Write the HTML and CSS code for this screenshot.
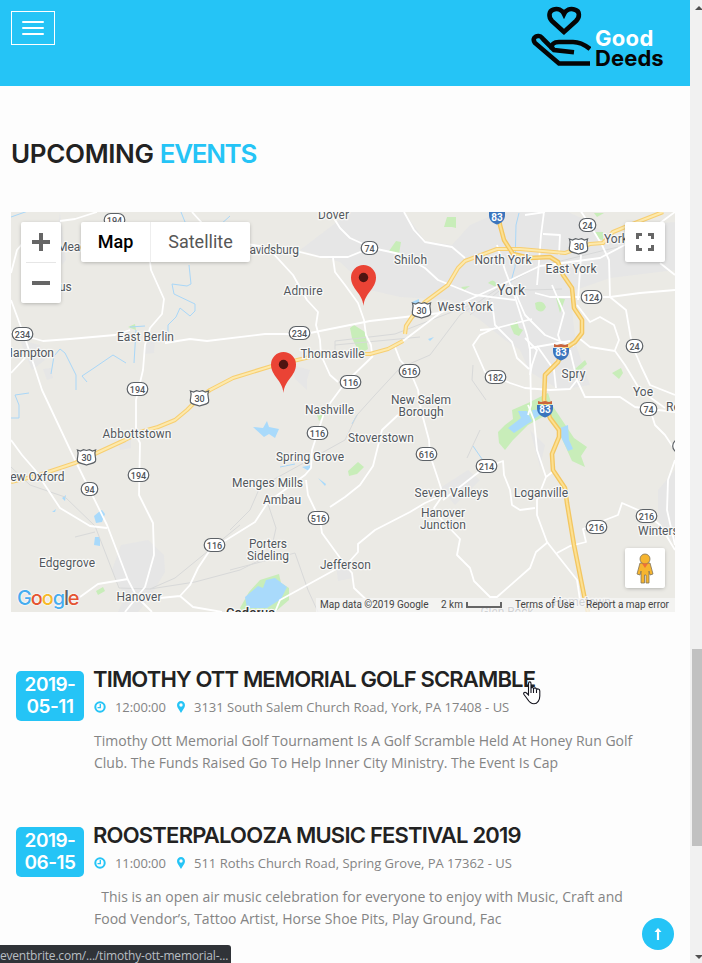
FILE: index.html
```html
<!DOCTYPE html>
<html lang="en">
<head>
<meta charset="utf-8">
<title>Good Deeds - Upcoming Events</title>
<link rel="stylesheet" href="styles.css">
</head>
<body>
<div class="page">
  <header class="header">
    <button class="menu" aria-label="Menu"><span></span><span></span><span></span></button>
    <div class="brand">
      <svg class="brand-icon" width="60" height="62" viewBox="531 6 60 62" fill="none" stroke="#050505" stroke-width="4.6">
        <path d="M564 32 L552 21 C548 17 549 11 553 9.700 C558 8 562 10 564 14 C566 10 570 8 575 9.700 C580 11 580 17 576 21 Z"/>
        <path d="M590 63.500 H559 L535 43 C532 39 535 35.500 539 36 C541 36 542 38 543.500 39.500 L554 50 L574 52.300"/>
        <path d="M552 49 C551 44 554 42 559 42 H573 C580 42 585 45 590 49"/>
      </svg>
      <div class="brand-name"><span class="good">Good</span><span class="deeds">Deeds</span></div>
    </div>
  </header>
  <main>
    <h1 class="title">UPCOMING <span>EVENTS</span></h1>
    <section class="map">
      <svg class="map-canvas" width="664" height="400" viewBox="11 212 664 400">
        <defs>
          <g id="s3"><rect x="-10.300" y="-6.500" width="20.600" height="13" rx="6.500"/></g>
          <g id="s2"><rect x="-8.300" y="-6.500" width="16.600" height="13" rx="6.500"/></g>
          <path id="us" d="M-9 -7 L-6 -6 L-3 -7.300 L0 -6.500 L3 -7.300 L6 -6 L9 -7 C7 -2 10 0 9 4 C8 7 4 6 0 8 C-4 6 -8 7 -9 4 C-10 0 -7 -2 -9 -7Z"/>
          <g id="i83"><path d="M-8 -4 H8 V-1 C8 5 4 7 0 8.500 C-4 7 -8 5 -8 -1Z" fill="#3b75bd"/><path d="M-7 -5 V-8 L-4 -7 L0 -8 L4 -7 L7 -8 V-5Z" fill="#c9643d"/></g>
          <g id="pin"><path d="M0 27 C-1 14 -12.500 10 -12.500 -1.500 A12.500 12.500 0 0 1 12.500 -1.500 C12.500 10 1 14 0 27Z" fill="#ea4335"/><circle cy="-1.500" r="4.700" fill="#4f1411"/></g>
        </defs>
        <rect x="11" y="212" width="664" height="400" fill="#ebeae5"/>
        <g fill="#e6e6e6">
          <path d="M350 212 L404 212 L425 241 L452 245 L470 225 L500 212 L568 212 L590 222 L612 240 L640 225 L675 222 V270 L610 278 L570 292 L576 345 L590 385 L560 390 L530 372 L520 350 L505 340 L480 320 L450 300 L400 297 L370 290 L340 262 L300 250 Z"/>
          <path d="M121 545 L148 540 L164 555 L165 572 L150 597 L138 612 H118 L125 597 L112 570Z"/>
          <path d="M60 213 L66 260 L62 265 L55 240Z M20 340 L40 345 L45 360 L32 370Z M43 369 l8 -1 l2 10 l-6 2z M145 334 l10 5 l-1 14 l-9 1z M292 365 l18 5 l-3 10 l0 10 l-12 -11z M440 488 l28 -18 l12 10 l-25 25z M530 430 l15 15 l-5 22z M658 490 l17 -20 v75 l-17 -25z M118 440 l13 -1 v9 l-11 2z M336 565 l12 3 l5 10 l-15 3z"/>
        </g>
        <g fill="#c8edb9">
          <path d="M350 328 l4 -3 l11 7 l3 17 l-8 5 l-8 -16z M389 251 l7 -10 l5 1 l-2 12z M444 227 l3 -10 l9 0 v11l-4 -1z M535 303 q8 -4 11 4 q-4 8 -10 2z M510 325 l7 -4 l2 7 l4 2 l-4 6 l-5 -2z M556 298 l9 1 l-5 14z M594 232 l9 0 v8l-5 -1z M488 283 q5 -5 8 0 v4z M575 369 l10 -9 l2 4 l-9 8z M612 373 l9 -5 l2 5 l-4 6z M128 327 l7 -3 l1 6z M348 471 l10 -9 l6 5 l-7 7 l-8 2z M96 591 l7 -4 l2 4 l-7 4z M461 287 l9 -1 l-6 4z M594 213 l10 0 l-7 4z M317 415 l8 0 l-6 6z"/>
          <path d="M498 432 L505 425 L513 419 L512 410 L528 403 L548 393 L552 405 L574 438 L587 447 L581 456 L585 467 L572 461 L558 430 L546 415 L528 425 L513 440 L505 450 L499 443Z"/>
          <path d="M240 608 L249 592 L260 580 L279 574 L281 583 L289 588 L289 600 L275 612 H242Z"/>
        </g>
        <g fill="#a9dafb">
          <path d="M245 597 L258 586 L263 588 L266 580 L275 578 L287 587 L281 599 L267 608 L247 608Z M253 427 L263 428 L267 421 L269 427 L279 429 L275 438 L269 434 L264 437Z M508 428 L521 418 L518 411 L527 411 L532 421 L514 433Z M532 410 L545 409 L543 413 L534 419Z M545 414 L560 428 L568 425 L569 440 L573 449 L568 451 L560 435Z M94 516 l6 -5 l2 -1 l3 4 l-3 8 l-6 1z M95 537 l5 0 v9 l-6 -1z M62 498 l4 -3 l-1 6z M318 478 l8 6 l-1 2z M302 467 l9 -2 l-2 6z M412 302 l7 -3 v10 l-6 0z M428 339 l6 -2 l-4 4z M52 512 l4 -3 l-1 3z"/>
        </g>
        <g fill="none" stroke="#a9d7f8" stroke-width="1">
          <path d="M11 217 L28 211 M181 212 L185 222 L198 232 L208 227 M220 225 L230 216 M189 265 L191 284 L187 286 L172 284 L174 294 L195 304 L195 311 L190 316 L180 308 L176 317 L168 325 L168 332 M145 326 L130 327 M136 330 L134 363 M126 363 L113 355 L94 368 L82 376 L87 382 M76 390 L76 375 L65 353 L60 349 L54 356 L51 374 M29 393 L15 395 L19 405 L19 418 L11 418 M519 213 L516 225 L515 267 L510 285 M473 446 L482 459 M280 467 L295 464 M352 424 L357 415 M689 545 L689 555"/>
        </g>
        <g fill="none" stroke="#d8d9d9" stroke-width="1">
          <path d="M11 467 L30 485 L65 497 L95 526 L119 588 L150 589 L175 578 L240 525 M150 589 L195 582 L240 570 L270 555 L276 528 L268 504 M75 537 L95 532 M230 530 L250 510 L260 487 L300 465 L345 440 L357 415 L375 395 L400 368 L430 355 L460 315 L500 287 L530 290 L562 289 M335 350 V341 L395 334 L470 305 M230 570 L295 553 L308 590 L318 612 M473 365 L472 380 L486 400 M467 458 L480 430 M470 315 L510 282 L540 266 L618 247 M335 345 L420 337"/>
        </g>
        <g fill="none" stroke="#fff" stroke-width="1.800" stroke-linejoin="round">
          <path d="M11 273 L17 250 L22 244 M60 221 L75 219 L97 212 M192 212 L202 223 M150 262 L151 270 L164 299 L162 314 L150 328 L145 345 L143 370 L136 400 L136 435 L140 443 L139 495 L153 523 L154 555 L145 587 L125 612"/>
          <path d="M11 300 L25 338 L42 390 L75 460 L107 525 L128 580 L137 597 L152 612 M11 332 L43 341 L70 339 L115 335 L130 330 M165 343 L190 339 L207 341 L265 334 L305 334 L335 328 L370 321 L405 317 L440 313 M11 373 L25 358 M11 440 L22 455 L35 470 L60 508 L90 526 L107 528 M80 597 L98 584 L128 579"/>
          <path d="M140 600 L180 596 L193 607 L222 612 M180 596 L190 585 L198 568 L210 550 L255 522 L268 502 L305 475 L311 468 L312 450 L325 410 L345 383 L373 356 M330 212 L340 228 L350 238 L372 248 L400 254 L425 268 L438 280 L475 295 L515 300"/>
          <path d="M240 243 L300 252 L320 257 L348 257 L370 248 M333 258 L335 272 L345 285 L358 303 L364 320 L366 335 L371 345 L372 354 M270 250 L293 275 L307 300 L318 312 L316 325 L320 340 L321 355 L330 375 L338 382 M404 212 L414 230 L425 242 L452 247 L465 258"/>
          <path d="M403 341 L440 313 L490 290 L540 266 L600 258 L636 239 M395 347 L400 360 L410 371 L418 390 L421 410 L429 440 L430 455 L440 485 L443 495 L425 503 L410 512 L375 530 L358 544 L358 552 L349 562 L280 600 L275 612"/>
          <path d="M306 480 L308 495 L320 520 L322 533 L343 562 L352 573 L354 588 L375 608 M330 507 L345 497 L360 485 L373 466 L382 430 L398 415 M443 500 L475 475 L484 468 L503 461 L504 475 L510 490 L512 505 L520 510 L535 508 M443 495 L434 508 L440 518 L460 539 L457 555 L470 568 L474 581 L490 597 L497 597 L530 568 L536 552 L548 542"/>
          <path d="M528 405 L534 420 L537 450 L546 477 L537 500 L537 515 L547 542 L577 580 L580 600 M546 477 L555 470 M557 553 L570 546 L586 542 L583 529 L600 522 L618 515 L622 503 L645 513 L660 525 L675 550 M675 460 L668 480 L667 510 L675 545"/>
          <path d="M525 215 L545 212 M544 212 L541 235 L539 262 L537 285 M543 234 L560 235 L559 255 M581 255 L578 300 M497 245 L505 270 L515 297 L527 335 L530 350 L531 405 L528 415 M492 302 L495 325 L512 342 L517 358 L529 369 M512 285 L525 315 L545 335 L562 342 L574 346 M535 293 L550 297 L580 297 L610 297 L640 293 L675 290 M552 285 L564 313 L558 335 L562 347 M480 330 L493 329 L532 319 M495 328 L480 335 L473 345 L485 372 L510 383 L525 388 L550 390 L570 389 L577 380 L570 350"/>
          <path d="M525 338 L537 350 L532 365 L530 375 M537 346 L554 370 L556 388 M577 305 L590 322 L600 317 L614 325 L619 340 L615 350 M580 339 L590 347 L615 351 L625 365 L640 390 L665 408"/>
          <path d="M580 210 L590 225 L602 245 L609 260 L610 297 L626 310 L632 345 L641 366 L650 385 L675 395 M577 380 L585 397 L620 397 L635 407 L650 409 L675 412 M650 409 L655 425 L665 435 L675 450 M660 263 L675 275 M660 223 L675 212 M530 348 L570 341"/>
        </g>
        <g fill="none" stroke-linejoin="round">
          <path stroke="#f7cf72" stroke-width="4.200" d="M11 482 L36 476 L75 463 L125 440 L140 432 L158 427 L175 420 L187 410 L200 397 L210 390 L233 378 L272 366 L310 357 L335 354 L370 354 L388 349 L403 341 M405 334 L406 326 L412 317 L425 302 L448 285 L458 268 L465 261 L497 249 L520 249 L565 253 L590 244 L603 243 L613 232 L630 225 L663 212"/>
          <path stroke="#fde9ac" stroke-width="2" d="M11 482 L36 476 L75 463 L125 440 L140 432 L158 427 L175 420 L187 410 L200 397 L210 390 L233 378 L272 366 L310 357 L335 354 L370 354 L388 349 L403 341 M405 334 L406 326 L412 317 L425 302 L448 285 L458 268 L465 261 L497 249 L520 249 L565 253 L590 244 L603 243 L613 232 L630 225 L663 212"/>
          <path stroke="#f3c660" stroke-width="4.600" d="M498 212 L500 225 L504 240 L513 254 L530 258 L550 257 L558 262 L563 275 L572 288 L574 308 L582 320 L582 333 L575 342 L563 350 L558 362 L545 375 L544 400 L550 418 L559 430 L559 437 L552 454 L553 470 L565 488 L567 503 L574 545 L585 600 L588 612"/>
          <path stroke="#fce092" stroke-width="2" d="M498 212 L500 225 L504 240 L513 254 L530 258 L550 257 L558 262 L563 275 L572 288 L574 308 L582 320 L582 333 L575 342 L563 350 L558 362 L545 375 L544 400 L550 418 L559 430 L559 437 L552 454 L553 470 L565 488 L567 503 L574 545 L585 600 L588 612"/>
        </g>
        <g class="shields">
          <use href="#s3" x="114.500" y="220"/><use href="#s3" x="22.500" y="334"/><use href="#s3" x="137.500" y="389"/><use href="#s3" x="138.500" y="475"/><use href="#s3" x="214.500" y="545"/><use href="#s3" x="299.500" y="333"/><use href="#s3" x="350.500" y="382"/><use href="#s3" x="317.500" y="433"/><use href="#s3" x="409.500" y="371"/><use href="#s3" x="426.500" y="454"/><use href="#s3" x="318.500" y="518"/><use href="#s3" x="486.500" y="466"/><use href="#s3" x="495.500" y="377"/><use href="#s3" x="591.500" y="297"/><use href="#s3" x="596.500" y="527"/><use href="#s3" x="646.500" y="516"/><use href="#s3" x="683" y="446"/>
          <use href="#s2" x="89.500" y="489"/><use href="#s2" x="369.500" y="248"/><use href="#s2" x="587.500" y="225"/><use href="#s2" x="634.500" y="346"/><use href="#s2" x="648.500" y="409"/>
          <use href="#us" x="199.500" y="398"/><use href="#us" x="86.500" y="457"/><use href="#us" x="421.500" y="310"/><use href="#us" x="578.500" y="246"/>
        </g>
        <use href="#i83" x="497" y="216"/><use href="#i83" x="561" y="352"/><use href="#i83" x="545" y="409"/>
        <g class="nums">
          <text x="114.500" y="223.500">194</text><text x="22.500" y="337.500">234</text><text x="137.500" y="392.500">194</text><text x="138.500" y="478.500">194</text><text x="214.500" y="548.500">116</text><text x="299.500" y="336.500">234</text><text x="350.500" y="385.500">116</text><text x="317.500" y="436.500">116</text><text x="409.500" y="374.500">616</text><text x="426.500" y="457.500">616</text><text x="318.500" y="521.500">516</text><text x="486.500" y="469.500">214</text><text x="495.500" y="380.500">182</text><text x="591.500" y="300.500">124</text><text x="596.500" y="530.500">216</text><text x="646.500" y="519.500">216</text>
          <text x="89.500" y="492.500">94</text><text x="369.500" y="251.500">74</text><text x="587.500" y="228.500">24</text><text x="634.500" y="349.500">24</text><text x="648.500" y="412.500">74</text><text x="199.500" y="402">30</text><text x="86.500" y="461">30</text><text x="421.500" y="313.500">30</text><text x="579" y="250">30</text>
          <g class="inter"><text x="497" y="220.500">83</text><text x="561" y="356">83</text><text x="545" y="413">83</text></g>
        </g>
        <g class="labels">
          <text x="333.500" y="219" textLength="31">Dover</text>
          <text x="242" y="254" class="start" textLength="57">Davidsburg</text>
          <text x="57" y="251" class="start">Meadow</text><text x="59" y="291" class="start">us</text>
          <text x="410.500" y="264" textLength="33">Shiloh</text>
          <text x="303" y="295" textLength="39">Admire</text>
          <text x="145.500" y="341" textLength="57">East Berlin</text>
          <text x="54" y="357" class="end">Hampton</text>
          <text x="332.500" y="358" textLength="64">Thomasville</text>
          <text x="329.500" y="414" textLength="49">Nashville</text>
          <text x="421" y="404" textLength="60">New Salem</text><text x="421" y="416" textLength="45">Borough</text>
          <text x="381" y="442" textLength="66">Stoverstown</text>
          <text x="137" y="438" textLength="69">Abbottstown</text>
          <text x="64.500" y="481" class="end">New Oxford</text>
          <text x="310" y="461" textLength="68">Spring Grove</text>
          <text x="267.500" y="487" textLength="71">Menges Mills</text>
          <text x="282" y="504" textLength="38">Ambau</text>
          <text x="268" y="548" textLength="38">Porters</text><text x="268" y="560" textLength="42">Sideling</text>
          <text x="345.500" y="569" textLength="51">Jefferson</text>
          <text x="67" y="567" textLength="56">Edgegrove</text>
          <text x="139" y="601" textLength="45">Hanover</text>
          <text x="503" y="264" textLength="57">North York</text>
          <text x="571" y="273" textLength="51">East York</text>
          <text x="604" y="243" class="start">Yorklyn</text>
          <text x="511" y="295" class="city" textLength="28">York</text>
          <text x="465" y="311" textLength="55">West York</text>
          <text x="573.500" y="378" textLength="24">Spry</text>
          <text x="643" y="396" textLength="20">Yoe</text>
          <text x="666" y="411" class="start">Red Lion</text>
          <text x="451.500" y="497" textLength="74">Seven Valleys</text>
          <text x="541" y="497" textLength="54">Loganville</text>
          <text x="443" y="517" textLength="44">Hanover</text><text x="443" y="529" textLength="46">Junction</text>
          <text x="638" y="535" class="start">Winterstown</text>
          <text x="582" y="606" textLength="58">Hometown</text>
          <text x="507" y="616" textLength="53">Glen Rock</text>
          <text x="226" y="617" class="start dark" textLength="49">Codorus</text>
        </g>
        <use href="#pin" x="363.500" y="279"/><use href="#pin" x="283.500" y="366"/>
      </svg>
      <div class="zoomer"><span class="plus"></span><hr><span class="minus"></span></div>
      <div class="types"><b>Map</b><span>Satellite</span></div>
      <div class="square fullscreen"><svg width="18" height="18" fill="none" stroke="#666" stroke-width="3"><path d="M1.500 6V1.500H6M12 1.500H16.500V6M16.500 12V16.500H12M6 16.500H1.500V12"/></svg></div>
      <div class="square pegman"><svg width="18" height="31" viewBox="0 0 18 31" fill="#f6b52f" stroke="#80745c" stroke-width=".8"><path d="M4 10 H14 L17 21 L14 22 L13 18 V30 H10 V22 H8.500 V30 H5 V18 L4 22 L1 21Z"/><circle cx="9" cy="6" r="5"/><path d="M6 10.500H12L9 15Z" fill="#ee7137" stroke="none"/></svg></div>
      <div class="google"><i class="b">G</i><i class="r">o</i><i class="y">o</i><i class="b">g</i><i class="k">l</i><i class="r">e</i></div>
      <div class="credits"><span class="copyright">Map data ©2019 Google</span><span class="scale">2 km <i></i></span><span class="terms">Terms of Use</span><span class="report">Report a map error</span></div>
    </section>
    <section class="events">
      <article class="event">
        <time class="date">2019-<br>05-11</time>
        <div class="info">
          <h2 class="one">TIMOTHY OTT MEMORIAL GOLF SCRAMBLE</h2>
          <p class="meta"><svg class="clock" width="12" height="12"><circle cx="6" cy="6" r="4.700" fill="none" stroke="#25c4f6" stroke-width="2"/><path d="M6.300 3V6.700H3.500" fill="none" stroke="#25c4f6" stroke-width="1.300"/></svg><span class="hour">12:00:00</span><svg class="spot" width="8" height="12"><path fill="#25c4f6" fill-rule="evenodd" d="M4 12L.6 6.500C-1 3 1 0 4 0S9 3 7.400 6.500ZM4 2.300A1.700 1.700 0 1 0 4 5.700A1.700 1.700 0 1 0 4 2.300"/></svg><span class="place">3131 South Salem Church Road, York, PA 17408 - US</span></p>
          <p class="text">Timothy Ott Memorial Golf Tournament Is A Golf Scramble Held At Honey Run Golf<br>Club. The Funds Raised Go To Help Inner City Ministry. The Event Is Cap</p>
        </div>
      </article>
      <article class="event">
        <time class="date">2019-<br>06-15</time>
        <div class="info">
          <h2 class="two">ROOSTERPALOOZA MUSIC FESTIVAL 2019</h2>
          <p class="meta"><svg class="clock" width="12" height="12"><circle cx="6" cy="6" r="4.700" fill="none" stroke="#25c4f6" stroke-width="2"/><path d="M6.300 3V6.700H3.500" fill="none" stroke="#25c4f6" stroke-width="1.300"/></svg><span class="hour">11:00:00</span><svg class="spot" width="8" height="12"><path fill="#25c4f6" fill-rule="evenodd" d="M4 12L.6 6.500C-1 3 1 0 4 0S9 3 7.400 6.500ZM4 2.300A1.700 1.700 0 1 0 4 5.700A1.700 1.700 0 1 0 4 2.300"/></svg><span class="place">511 Roths Church Road, Spring Grove, PA 17362 - US</span></p>
          <p class="text">&nbsp; This is an open air music celebration for everyone to enjoy with Music, Craft and<br>Food Vendor’s, Tattoo Artist, Horse Shoe Pits, Play Ground, Fac</p>
        </div>
      </article>
    </section>
  </main>
</div>
<aside class="scrollbar"><i class="up"></i><i class="thumb"></i><i class="down"></i></aside>
<div class="to-top"><svg width="8" height="12" fill="none" stroke="#fff"><path stroke-width="2.200" d="M4 12V2"/><path d="M.5 4L4 0L7.500 4Z" fill="#fff" stroke="none"/></svg></div>
<div class="status">eventbrite.com/.../timothy-ott-memorial-...</div>
<svg class="cursor" width="18" height="24" viewBox="0 0 18 24" fill="#fff" stroke="#15151f" stroke-width="1.100"><path d="M5.500 14V2.500C5.500 .3 8 .3 8 2.500V8C8 5.800 10.500 6 10.500 8C11 6.300 13.500 6.500 13.500 8.800C14 7.500 16.800 7.500 16.800 10V15C16.800 19 14.500 22.800 11 22.800C7 22.800 5.500 20 4 17.500L1 13.500C-.2 11.800 2 10.500 3.500 12ZM8 8V12M10.500 8V12M13.500 9V12"/></svg>
</body>
</html>
```
FILE: styles.css
```css
* { box-sizing: border-box; }
body { margin: 0; height: 963px; overflow: hidden; display: grid; grid-template-columns: 690px 12px; background: #fdfdfd; font-family: "Open Sans", sans-serif; color: #848484; }
.page { height: 963px; overflow: hidden; }
.header { height: 86px; background: #25c4f6; display: flex; justify-content: space-between; padding: 0 0 0 11px; }
.menu { width: 44px; height: 34px; margin-top: 11px; padding: 0; border: 1px solid #fff; background: none; display: flex; flex-direction: column; align-items: center; justify-content: center; gap: 4px; }
.menu span { width: 22px; height: 2px; background: #fff; border-radius: 1px; }
.brand { display: flex; width: 159px; padding-top: 6px; }
.brand-icon { flex: none; }
.brand-name { font: 700 22px/20px Inter, sans-serif; padding: 22px 0 0 4px; display: flex; flex-direction: column; }
.good { color: #fff; letter-spacing: .3px; }
.deeds { color: #050505; letter-spacing: .1px; }
.title { margin: 52px 0 0 11px; height: 74px; color: #222; font: 600 26px/32px Inter, sans-serif; letter-spacing: -.35px; white-space: nowrap; }
.title span { color: #25c4f6; letter-spacing: -1.35px; }
.map { position: relative; width: 664px; height: 400px; margin-left: 11px; overflow: hidden; font-family: Roboto, sans-serif; }
.map-canvas { display: block; }
.shields { fill: #fff; stroke: #5c6166; stroke-width: 1.2; }
.nums { font: 500 9px Roboto, sans-serif; fill: #4f5459; text-anchor: middle; }
.inter { font-size: 10px; font-weight: 700; fill: #fff; }
.labels { font: 400 12px Roboto, sans-serif; fill: #52575d; text-anchor: middle; stroke: #f8f8f6; stroke-width: 2.5px; paint-order: stroke; stroke-linejoin: round; }
.labels .start { text-anchor: start; }
.labels .end { text-anchor: end; }
.labels .city { font-size: 14px; }
.labels .dark { font-size: 13px; fill: #333; font-weight: 500; }
.zoomer, .types, .square { position: absolute; background: #fff; border-radius: 2px; box-shadow: 0 1px 4px -1px rgba(0,0,0,.35); }
.zoomer { left: 10px; top: 10px; width: 40px; height: 81px; display: grid; grid-template-rows: 40px 1px 40px; justify-items: center; align-items: center; }
.zoomer hr { width: 30px; margin: 0; border: 0; height: 1px; background: #e6e6e6; }
.plus { width: 18px; height: 18px; background: linear-gradient(#666,#666) center/18px 4px no-repeat, linear-gradient(#666,#666) center/4px 18px no-repeat; }
.minus { width: 18px; height: 4px; background: #666; }
.types { left: 70px; top: 10px; width: 169px; height: 40px; display: flex; font-size: 18px; line-height: 40px; text-align: center; color: #565656; }
.types b { width: 70px; font-weight: 500; color: #000; border-right: 1px solid #eee; }
.types span { width: 99px; }
.square { left: 614px; width: 40px; height: 40px; display: grid; place-items: center; }
.fullscreen { top: 10px; }
.pegman { top: 336px; }
.google { position: absolute; left: 6px; top: 374px; font: 500 20px/24px Inter, sans-serif; letter-spacing: -1.15px; display: flex; text-shadow: 0 0 2px #fff, 0 0 2px #fff; }
.google i { font-style: normal; }
.google .b { color: #45acef; } .google .r { color: #e45432; } .google .y { color: #f7b928; } .google .k { color: #5f6368; }
.credits { position: absolute; right: 0; bottom: 0; width: 359px; height: 14px; display: flex; background: rgba(245,245,245,.78); font-size: 10px; line-height: 14px; color: #444; white-space: nowrap; padding-left: 4px; }
.copyright { width: 121px; letter-spacing: -.02px; }
.scale { width: 74px; display: flex; gap: 3px; }
.scale i { width: 36px; height: 6px; margin-top: 4px; border: 2px solid #666; border-top: 0; }
.terms { width: 71px; }
.report { letter-spacing: -.03px; }
.events { padding: 55px 0 0 16px; }
.event { display: flex; height: 156px; gap: 10px; }
.date { width: 68px; height: 50px; margin-top: 4px; border-radius: 5px; background: #25c4f6; color: #fff; font: 600 19px/22px Inter, sans-serif; padding-top: 3px; text-align: center; letter-spacing: -.5px; }
.info { white-space: nowrap; }
h2 { margin: -1px 0 0 -1px; height: 27px; font: 600 22px/26px Inter, sans-serif; color: #222; }
.one { letter-spacing: -.85px; }
.two { letter-spacing: -.78px; }
.meta { margin: 4px 0 0; height: 20px; display: flex; align-items: center; font-size: 13px; line-height: 20px; }
.hour { margin: 0 9px; width: 53px; letter-spacing: -.08px; }
.place { margin-left: 9px; }
.text { margin: 13px 0 0; font-size: 14px; line-height: 22px; letter-spacing: .005px; }
.scrollbar { background: #f1f1f1; height: 963px; display: grid; grid-template-rows: 649px 197px 117px; padding-left: 2px; }
.thumb { background: #c1c1c1; }
.up { width: 8px; height: 4px; margin: 6px 0 0 3px; background: #505050; clip-path: polygon(50% 0, 100% 100%, 0 100%); }
.down { width: 8px; height: 4px; margin: 109px 0 0 3px; background: #505050; clip-path: polygon(0 0, 100% 0, 50% 100%); }
.to-top { position: absolute; left: 642px; top: 918px; width: 32px; height: 32px; border-radius: 50%; background: #25c4f6; display: grid; place-items: center; }
.status { position: absolute; left: 0; top: 945px; width: 231px; height: 18px; border-radius: 0 3px 0 0; background: #303338; color: #b9bec3; font: 12px/22px "Open Sans", sans-serif; letter-spacing: -.2px; white-space: nowrap; overflow: hidden; }
.cursor { position: absolute; left: 523px; top: 681px; }
```
